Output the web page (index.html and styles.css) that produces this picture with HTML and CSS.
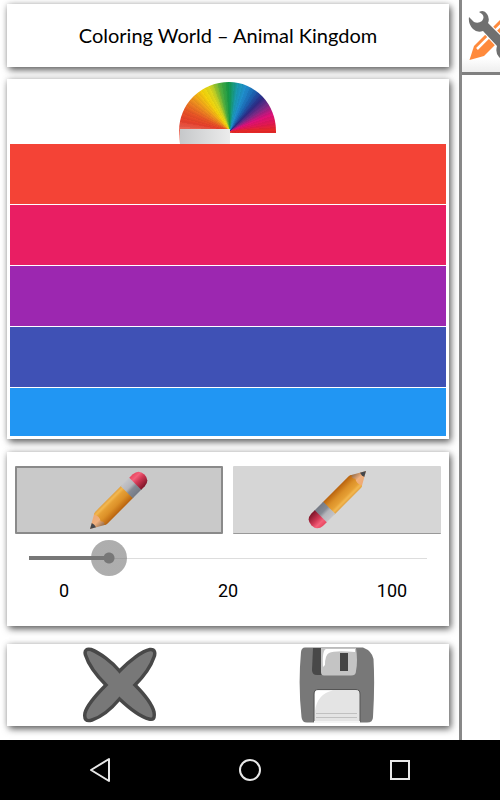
FILE: index.html
```
<!DOCTYPE html>
<html lang="en">
<head>
    <meta charset="UTF-8">
    <meta name="viewport" content="width=device-width, initial-scale=1.0">
    <title>Coloring World – Animal Kingdom</title>
    <link rel="stylesheet" href="styles.css">
</head>
<body>
    <div class="app">
        <main class="panel">
            <header class="card title-card">
                <h1 class="title">Coloring World – Animal Kingdom</h1>
            </header>

            <section class="card color-card">
                <div class="wheel"></div>
                <div class="color-list">
                    <button type="button" class="color red" aria-label="Red"></button>
                    <button type="button" class="color pink" aria-label="Pink"></button>
                    <button type="button" class="color purple" aria-label="Purple"></button>
                    <button type="button" class="color indigo" aria-label="Indigo"></button>
                    <button type="button" class="color blue" aria-label="Blue"></button>
                </div>
            </section>

            <section class="card brush-card">
                <div class="tools">
                    <button type="button" class="tool selected" aria-label="Draw">
                        <svg class="pencil" viewBox="0 0 58 58">
                            <defs>
                                <linearGradient id="wood" x1="0" y1="0" x2="0" y2="1">
                                    <stop offset="0" stop-color="#e0a040"/>
                                    <stop offset="0.15" stop-color="#f3b850"/>
                                    <stop offset="0.3" stop-color="#e6a035"/>
                                    <stop offset="0.6" stop-color="#dc9028"/>
                                    <stop offset="1" stop-color="#b8620e"/>
                                </linearGradient>
                                <linearGradient id="metal" x1="0" y1="0" x2="0" y2="1">
                                    <stop offset="0" stop-color="#c4c4c8"/>
                                    <stop offset="0.4" stop-color="#b4b5ba"/>
                                    <stop offset="0.6" stop-color="#858a94"/>
                                    <stop offset="1" stop-color="#747984"/>
                                </linearGradient>
                                <linearGradient id="rubber" x1="0" y1="0" x2="0" y2="1">
                                    <stop offset="0" stop-color="#e84860"/>
                                    <stop offset="0.25" stop-color="#f4607a"/>
                                    <stop offset="0.5" stop-color="#d23a56"/>
                                    <stop offset="1" stop-color="#7c1428"/>
                                </linearGradient>
                                <linearGradient id="point" x1="0" y1="0" x2="0" y2="1">
                                    <stop offset="0" stop-color="#f0a870"/>
                                    <stop offset="0.5" stop-color="#eeb080"/>
                                    <stop offset="1" stop-color="#8c6440"/>
                                </linearGradient>
                                <g id="pencil" transform="translate(0 58) rotate(-45)">
                                    <path d="M0 0L14 -8L18 0L14 8Z" fill="url(#point)"/>
                                    <path d="M0 0L5.500 -3L6 0L5.500 3Z" fill="#44474c"/>
                                    <path d="M13 -7.500Q14 -8.500 16 -8.500H53V8.500H16Q14 8.500 13 7.500Q16 5 13 2Q16 -2 13 -7.500Z" fill="url(#wood)"/>
                                    <path d="M52 -8.500H65V8.500H52Z" fill="url(#metal)"/>
                                    <path d="M64 -8.500H69Q77 -8 77 0Q77 8 69 8.500H64Z" fill="url(#rubber)"/>
                                </g>
                            </defs>
                            <use href="#pencil"/>
                        </svg>
                    </button>
                    <button type="button" class="tool" aria-label="Erase">
                        <svg class="pencil" viewBox="0 0 58 58">
                            <use href="#pencil" transform="rotate(180 29 29)"/>
                        </svg>
                    </button>
                </div>
                <input type="range" class="slider" id="size" min="0" max="100" value="20" aria-label="Brush size" style="--value: 0.2">
                <div class="scale">
                    <span>0</span>
                    <output for="size" class="size-value">20</output>
                    <span>100</span>
                </div>
            </section>

            <section class="card action-card">
                <button type="button" class="action" aria-label="Close">
                    <svg width="74" height="76" viewBox="0 0 74 76">
                        <path d="M36.500 24C46 14 59 4 67 2.500C72 2 72.500 6 71 10C68 19 61 29 52 38C61 47 69 57 71 65C72 72 70 73 66 72C58 70 46 61 36.500 52C29 61 18 70 9 73C3 75 1 72 2 66C4 58 14 47 23 38C13 28 5 16 2.500 8C1 3 4 1.500 8 2.500C17 6 29 15 36.500 24Z" fill="#787878" stroke="#484848" stroke-width="3.500"/>
                    </svg>
                </button>
                <button type="button" class="action" aria-label="Save">
                    <svg width="76" height="76" viewBox="0 0 76 76">
                        <path d="M6 0.500H64Q73 4 74.500 12Q76 38 74 70Q74 75.500 68 75.500H8Q3 75.500 2.500 70Q-1 38 2 5Q2.500 0.500 6 0.500Z" fill="#787878"/>
                        <path d="M14 1H24V28H18Q13 28 13 23Z" fill="#484848"/>
                        <path d="M22 1H57Q59 14 57 24Q57 28.500 52 28.500H25Q22 28.500 22 25Z" fill="#c4c4c4"/>
                        <path d="M24 20Q23 3 27 2H56V5Q36 3 30 6Q26 8 26 18Z" fill="#fff"/>
                        <path d="M41 6H49V24H41Z" fill="#444"/>
                        <path d="M15 75V47Q15 42.500 19 42.500H57Q61 42.500 61 47V75Z" fill="#e4e4e4"/>
                        <path d="M15 75V47Q15 42.500 19 42.500H57Q61 42.500 61 47V75" fill="none" stroke="#555"/>
                        <path d="M16 64V46Q16 43.500 19 43.500H34Q18 47 16 64Z" fill="#fff"/>
                        <path d="M17 66.500H58M17 70.500H58" stroke="#c0c0c0"/>
                        <path d="M15 75H61" stroke="#f4f4f4" stroke-width="2"/>
                    </svg>
                </button>
            </section>
        </main>

        <aside class="side">
            <button type="button" class="settings" aria-label="Settings">
                <svg width="52" height="52" viewBox="0 0 52 52">
                    <path d="M1.500 50L6 36L36 6L46 16L16 46Z" fill="#ff8a3c"/>
                    <path d="M9 39L33 15M28 32L38 22" stroke="#fff" stroke-width="2.500"/>
                    <path d="M1 7L6 12Q10 14 14 11Q17 7 14 4L11 2Q16 -1 19 4Q22 8 20 13L38 31Q44 30 48 34Q51 38 50 43L44 38L38 43L44 50Q35 52 31 47Q27 43 29 36L15 21Q9 23 5 19Q0 14 1 7Z" fill="#707070" stroke="#fff" stroke-width="2" paint-order="stroke"/>
                </svg>
            </button>
        </aside>
    </div>

    <nav class="navbar">
        <button type="button" class="nav-button" aria-label="Back">
            <svg width="24" height="26" viewBox="0 0 24 26">
                <path d="M21 2V24L3 13Z" fill="none" stroke="#e8e8e8" stroke-width="2" stroke-linejoin="round"/>
            </svg>
        </button>
        <button type="button" class="nav-button" aria-label="Home">
            <svg width="24" height="24" viewBox="0 0 24 24">
                <circle cx="12" cy="12" r="10" fill="none" stroke="#e8e8e8" stroke-width="2"/>
            </svg>
        </button>
        <button type="button" class="nav-button" aria-label="Recent apps">
            <svg width="24" height="24" viewBox="0 0 24 24">
                <rect x="3" y="3" width="18" height="18" fill="none" stroke="#e8e8e8" stroke-width="2"/>
            </svg>
        </button>
    </nav>

    <script>
        // keep the filled part of the track and the number in step with the slider
        var slider = document.getElementById("size");
        var sizeValue = document.getElementsByClassName("size-value")[0];
        slider.oninput = function () {
            slider.style.setProperty("--value", slider.value / 100);
            sizeValue.textContent = slider.value;
        };
    </script>
</body>
</html>
```
FILE: styles.css
```
*{
    padding: 0;
    margin: 0;
    box-sizing: border-box;
}

body{
    display: flex;
    flex-direction: column;
    height: 100vh;
    background-color: #fff;
    color: #000;
    font-family: Roboto, sans-serif;
}

button{
    border: none;
    background: none;
    cursor: pointer;
}

svg{
    display: block;
}

.app{
    flex: 1;
    min-height: 0;
    display: flex;
}

/* ==================left panel===================== */
.panel{
    flex: 1;
    min-width: 0;
    display: flex;
    flex-direction: column;
    padding: 4px 10px 14px 7px;
    border-right: 3px solid #888;
}

.card{
    background-color: #fff;
    box-shadow: 2px 3px 7px rgba(0, 0, 0, 0.6), 0 0 6px rgba(0, 0, 0, 0.15);
}

.title-card{
    padding: 16px 8px;
    margin-bottom: 12px;
    text-align: center;
}

.title{
    font-family: Lato, sans-serif;
    font-size: 20px;
    font-weight: 400;
    line-height: 31px;
}

.color-card{
    flex: 1;
    min-height: 0;
    display: flex;
    flex-direction: column;
    padding: 3px;
    margin-bottom: 13px;
}

.wheel{
    flex: none;
    width: 98px;
    height: 62px;
    margin: 0 auto;
    background:
        linear-gradient(90deg, #c6c8ca, #ececec) 1px 47px / 50px 15px no-repeat,
        repeating-conic-gradient(from 270deg at 51px 49px, rgba(0, 0, 0, 0.06) 0deg, transparent 5deg),
        conic-gradient(from 270deg at 51px 49px, #f0705f 0deg, #e8402c 12deg, #ea5426 24deg, #f08c20 38deg, #f8d80c 56deg, #d8d820 66deg, #50b040 78deg, #149a48 88deg, #1a9cb4 100deg, #2090d0 110deg, #1c64b4 122deg, #2c2c88 134deg, #802a88 146deg, #e0107c 158deg, #e41850 170deg, #e82828 178deg, #e82828 200deg, #f0705f 300deg);
    clip-path: path("M1 62L0 49A50 49 0 0 1 50 0A47 49 0 0 1 97 49V51H51V62Z");
}

.color-list{
    flex: 1;
    min-height: 0;
    display: flex;
    flex-direction: column;
    gap: 1px;
    overflow: hidden;
}

.color{
    flex: none;
    height: 60px;
}

.red{
    background-color: #f44336;
}

.pink{
    background-color: #e91e63;
}

.purple{
    background-color: #9c27b0;
}

.indigo{
    background-color: #3f51b5;
}

.blue{
    background-color: #2196f3;
}

/* ==================brush===================== */
.brush-card{
    padding: 14px 4px 25px;
    margin-bottom: 18px;
}

.tools{
    display: grid;
    grid-template-columns: 1fr 1fr;
    gap: 10px;
    padding: 0 4px;
}

.tool{
    display: flex;
    align-items: center;
    justify-content: center;
    height: 68px;
    border-bottom: 1px solid #999;
    border-radius: 1px;
    background-color: #d6d6d6;
}

.tool.selected{
    border: 2px solid #8a8a8a;
    background-color: #c9c9c9;
}

.pencil{
    width: 58px;
    height: 58px;
}

.slider{
    -webkit-appearance: none;
    appearance: none;
    display: block;
    width: 100%;
    height: 36px;
    margin-top: 6px;
    background:
        linear-gradient(#777, #777) 18px 50% / calc((100% - 36px) * var(--value)) 4px no-repeat,
        linear-gradient(#ddd, #ddd) center / calc(100% - 36px) 1px no-repeat;
}

.slider::-webkit-slider-thumb{
    -webkit-appearance: none;
    width: 36px;
    height: 36px;
    border-radius: 50%;
    background: radial-gradient(circle, #777 5px, rgba(119, 119, 119, 0.6) 6px);
}

.scale{
    display: flex;
    justify-content: space-between;
    padding: 0 35px;
    margin-top: 5px;
    font-size: 18px;
    line-height: 20px;
    text-align: center;
}

.scale span,
.scale output{
    width: 36px;
}

/* ==================actions===================== */
.action-card{
    display: flex;
    padding: 3px 4px;
}

.action{
    flex: 1;
    display: flex;
    justify-content: center;
}

/* ==================right side===================== */
.side{
    flex: none;
    width: 38px;
    overflow: hidden;
}

.settings{
    display: flex;
    align-items: flex-start;
    width: 100%;
    height: 75px;
    padding: 10px 0 0 6px;
    border-bottom: 3px solid #808080;
    background: linear-gradient(#fff 80%, #eee);
    overflow: hidden;
}

.settings svg{
    flex: none;
}

/* ==================navigation bar===================== */
.navbar{
    display: flex;
    align-items: center;
    height: 60px;
    padding: 0 5%;
    background-color: #000;
}

.nav-button{
    flex: 1;
    display: flex;
    align-items: center;
    justify-content: center;
    height: 60px;
}
```
